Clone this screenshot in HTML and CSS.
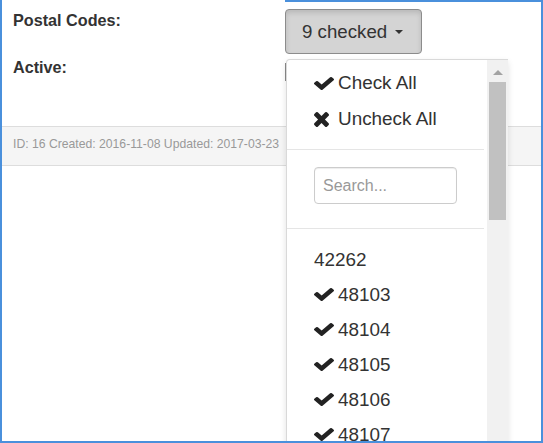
FILE: index.html
```html
<!DOCTYPE html>
<html>
<head>
<meta charset="utf-8">
<link rel="stylesheet" href="styles.css">
</head>
<body>
<div class="frame">
  <div class="form">
    <div class="row row-postal">
      <div class="label">Postal Codes:</div>
      <div class="ms">
        <button class="ms-btn">9 checked <span class="caret"></span></button>
        <div class="menu">
          <div class="menu-list">
            <div class="actions">
              <div class="item"><svg class="ico-check" viewBox="121 334 1550 1188" preserveAspectRatio="none"><path d="M1671 566q0 40-28 68l-724 724-136 136q-28 28-68 28t-68-28l-136-136-362-362q-28-28-28-68t28-68l136-136q28-28 68-28t68 28l294 295 656-657q28-28 68-28t68 28l136 136q28 28 28 68z"/></svg>Check All</div>
              <div class="item"><svg class="ico-x" viewBox="110 366 1188 1188"><path d="M1298 1322q0 40-28 68l-136 136q-28 28-68 28t-68-28l-294-294-294 294q-28 28-68 28t-68-28l-136-136q-28-28-28-68t28-68l294-294-294-294q-28-28-28-68t28-68l136-136q28-28 68-28t68 28l294 294 294-294q28-28 68-28t68 28l136 136q28 28 28 68t-28 68l-294 294 294 294q28 28 28 68z"/></svg>Uncheck All</div>
            </div>
            <div class="divider"></div>
            <div class="search-wrap"><input class="search" type="text" placeholder="Search..."></div>
            <div class="divider divider-2"></div>
            <div class="options">
              <div class="item plain">42262</div>
              <div class="item"><svg class="ico-check" viewBox="121 334 1550 1188" preserveAspectRatio="none"><path d="M1671 566q0 40-28 68l-724 724-136 136q-28 28-68 28t-68-28l-136-136-362-362q-28-28-28-68t28-68l136-136q28-28 68-28t68 28l294 295 656-657q28-28 68-28t68 28l136 136q28 28 28 68z"/></svg>48103</div>
              <div class="item"><svg class="ico-check" viewBox="121 334 1550 1188" preserveAspectRatio="none"><path d="M1671 566q0 40-28 68l-724 724-136 136q-28 28-68 28t-68-28l-136-136-362-362q-28-28-28-68t28-68l136-136q28-28 68-28t68 28l294 295 656-657q28-28 68-28t68 28l136 136q28 28 28 68z"/></svg>48104</div>
              <div class="item"><svg class="ico-check" viewBox="121 334 1550 1188" preserveAspectRatio="none"><path d="M1671 566q0 40-28 68l-724 724-136 136q-28 28-68 28t-68-28l-136-136-362-362q-28-28-28-68t28-68l136-136q28-28 68-28t68 28l294 295 656-657q28-28 68-28t68 28l136 136q28 28 28 68z"/></svg>48105</div>
              <div class="item"><svg class="ico-check" viewBox="121 334 1550 1188" preserveAspectRatio="none"><path d="M1671 566q0 40-28 68l-724 724-136 136q-28 28-68 28t-68-28l-136-136-362-362q-28-28-28-68t28-68l136-136q28-28 68-28t68 28l294 295 656-657q28-28 68-28t68 28l136 136q28 28 28 68z"/></svg>48106</div>
              <div class="item"><svg class="ico-check" viewBox="121 334 1550 1188" preserveAspectRatio="none"><path d="M1671 566q0 40-28 68l-724 724-136 136q-28 28-68 28t-68-28l-136-136-362-362q-28-28-28-68t28-68l136-136q28-28 68-28t68 28l294 295 656-657q28-28 68-28t68 28l136 136q28 28 28 68z"/></svg>48107</div>
            </div>
          </div>
          <div class="scrollbar">
            <div class="sb-arrow"></div>
            <div class="sb-thumb"></div>
          </div>
        </div>
      </div>
    </div>
    <div class="row row-active">
      <div class="label">Active:</div>
      <div class="field"><span class="active-box"></span></div>
    </div>
  </div>
  <div class="footer">ID: 16 Created: 2016-11-08 Updated: 2017-03-23</div>
</div>
</body>
</html>
```
FILE: styles.css
```css
* { box-sizing: border-box; }
html, body { margin: 0; padding: 0; background: #fff; }
body { font-family: "Liberation Sans", Arial, sans-serif; color: #333; }

.frame {
  position: relative;
  width: 543px;
  height: 443px;
  border-left: 2px solid #4a90dc;
  border-right: 2px solid #4a90dc;
  border-bottom: 2px solid #4a90dc;
  overflow: hidden;
  background: #fff;
}
.frame::before {
  content: "";
  position: absolute;
  top: 0;
  left: 283px;
  right: 0;
  height: 2px;
  background: #4a90dc;
  z-index: 5;
}

.form {
  padding: 9px 0 47px 11px;
  display: flex;
  flex-direction: column;
  gap: 2px;
}
.row {
  display: grid;
  grid-template-columns: 272px 1fr;
  align-items: start;
}
.row-postal { height: 45px; }
.label {
  font-weight: bold;
  font-size: 16.2px;
  line-height: 23px;
  color: #333;
}

.ms { position: relative; }
.ms-btn {
  display: flex;
  align-items: center;
  height: 45px;
  padding: 0 18px 0 16px;
  font-family: "Liberation Sans", Arial, sans-serif;
  font-size: 18.7px;
  color: #333;
  background: #d4d4d4;
  border: 1px solid #8c8c8c;
  border-radius: 4px;
  box-shadow: inset 0 3px 5px rgba(0,0,0,.125);
}
.caret {
  display: inline-block;
  margin-left: 8px;
  width: 0;
  height: 0;
  border-left: 4.5px solid transparent;
  border-right: 4.5px solid transparent;
  border-top: 4.5px solid #333;
}

.field { height: 23px; position: relative; }
.active-box {
  display: block;
  margin-top: 7px;
  width: 20px;
  height: 18px;
  border-left: 1px solid #8a8a8a;
}

.menu {
  position: absolute;
  top: 50px;
  left: 1px;
  width: 222px;
  height: 400px;
  display: flex;
  background: #fff;
  border: 1px solid rgba(0,0,0,.15);
  border-right: 0;
  border-bottom: 0;
  border-radius: 4px 0 0 0;
  box-shadow: 0 3px 6px rgba(0,0,0,.12);
  z-index: 3;
}
.menu-list {
  width: 200px;
  padding-top: 5px;
}
.item {
  display: flex;
  align-items: center;
  height: 36px;
  padding-left: 27px;
  font-size: 18.9px;
  color: #333;
  white-space: nowrap;
}
.options { padding-top: 13px; }
.options .item { height: 35px; }
.ico-check {
  width: 20px;
  height: 13px;
  margin-right: 4px;
  fill: #222;
  flex: none;
}
.ico-x {
  width: 15px;
  height: 15px;
  margin-right: 9px;
  fill: #222;
  flex: none;
}
.divider {
  height: 1px;
  margin: 12px 3px 0 0;
  background: #e5e5e5;
}
.divider-2 { margin-top: 0; }
.search-wrap {
  padding: 17px 0 24px 27px;
}
.search {
  display: block;
  width: 143px;
  height: 37px;
  padding: 0 8px;
  font-family: "Liberation Sans", Arial, sans-serif;
  font-size: 16px;
  color: #555;
  border: 1px solid #ccc;
  border-radius: 4px;
  box-shadow: inset 0 1px 1px rgba(0,0,0,.075);
  outline: none;
}
.search::placeholder { color: #999; }

.scrollbar {
  width: 21px;
  background: #f1f1f1;
  display: flex;
  flex-direction: column;
  align-items: center;
  padding-top: 10px;
}
.sb-arrow {
  width: 0;
  height: 0;
  border-left: 5px solid transparent;
  border-right: 5px solid transparent;
  border-bottom: 5px solid #a3a3a3;
}
.sb-thumb {
  margin-top: 7px;
  width: 17px;
  height: 138px;
  background: #c1c1c1;
}

.footer {
  height: 40px;
  padding: 9px 0 0 11px;
  font-size: 12.2px;
  line-height: 17px;
  color: #999;
  background: #f5f5f5;
  border-top: 1px solid #ddd;
  border-bottom: 1px solid #ddd;
}
```
